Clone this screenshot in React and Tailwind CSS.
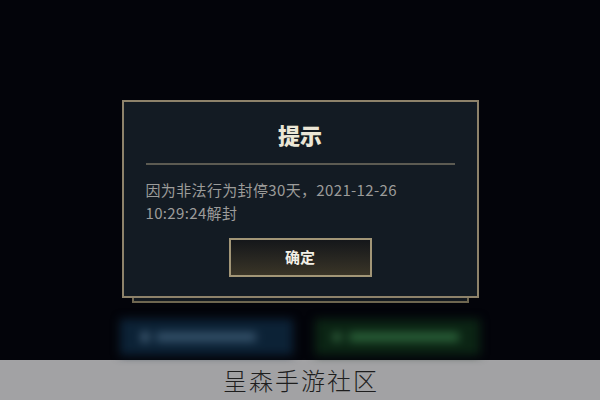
export default function App() {
  const cjk = { fontFamily: '"Noto Sans CJK SC", "Noto Sans", sans-serif' };
  return (
    <div className="w-[600px] h-[400px] bg-[#03040a] flex flex-col overflow-hidden" style={cjk}>
      <div className="h-[360px] flex flex-col items-center pt-[100px] relative">
        <div className="relative w-[357px]">
          <div className="relative z-10 h-[198px] bg-[#131b23] border-2 border-[#8d826a] flex flex-col items-center px-[22px]">
            <div className="mt-[16px] text-[22px] leading-[32px] font-black text-[#ebe6d6]">提示</div>
            <div className="mt-[13px] w-full h-[2px] bg-[#5c5b52]"></div>
            <div className="mt-[13px] w-full text-[15px] leading-[23px] text-[#9c9c9a] tracking-[0.35px]">
              因为非法行为封停30天，2021-12-26
              <br />
              10:29:24解封
            </div>
            <div className="mt-[14px] w-[143px] h-[39px] border-2 border-[#a29677] bg-gradient-to-b from-[#15171a] to-[#3a3527] flex items-center justify-center">
              <span className="text-[15px] font-bold text-[#f2efe6]">确定</span>
            </div>
          </div>
          <div className="mx-[10px] h-[5px] bg-[#141a20] border-x-2 border-b-2 border-[#6e6650]"></div>
        </div>
        <div className="mt-[16px] w-[360px] flex gap-[22px] blur-[5px]">
          <div className="flex-1 h-[36px] bg-[#0c2236] flex items-center px-[22px] gap-[8px]">
            <div className="w-[6px] h-[10px] rounded-full bg-[#5d7c95]"></div>
            <div className="w-[100px] h-[8px] bg-[#3c5a73]"></div>
          </div>
          <div className="flex-1 h-[36px] bg-[#0b2414] flex items-center px-[18px] gap-[8px]">
            <div className="w-[8px] h-[8px] rounded-full bg-[#3f7a4d]"></div>
            <div className="w-[110px] h-[8px] bg-[#2f6a3e]"></div>
          </div>
        </div>
      </div>
      <div className="h-[40px] bg-[#a2a2a4] flex items-center justify-center">
        <span className="text-[24px] font-light text-[#1e1e1e] tracking-[2px] pl-[2px]">呈森手游社区</span>
      </div>
    </div>
  );
}
